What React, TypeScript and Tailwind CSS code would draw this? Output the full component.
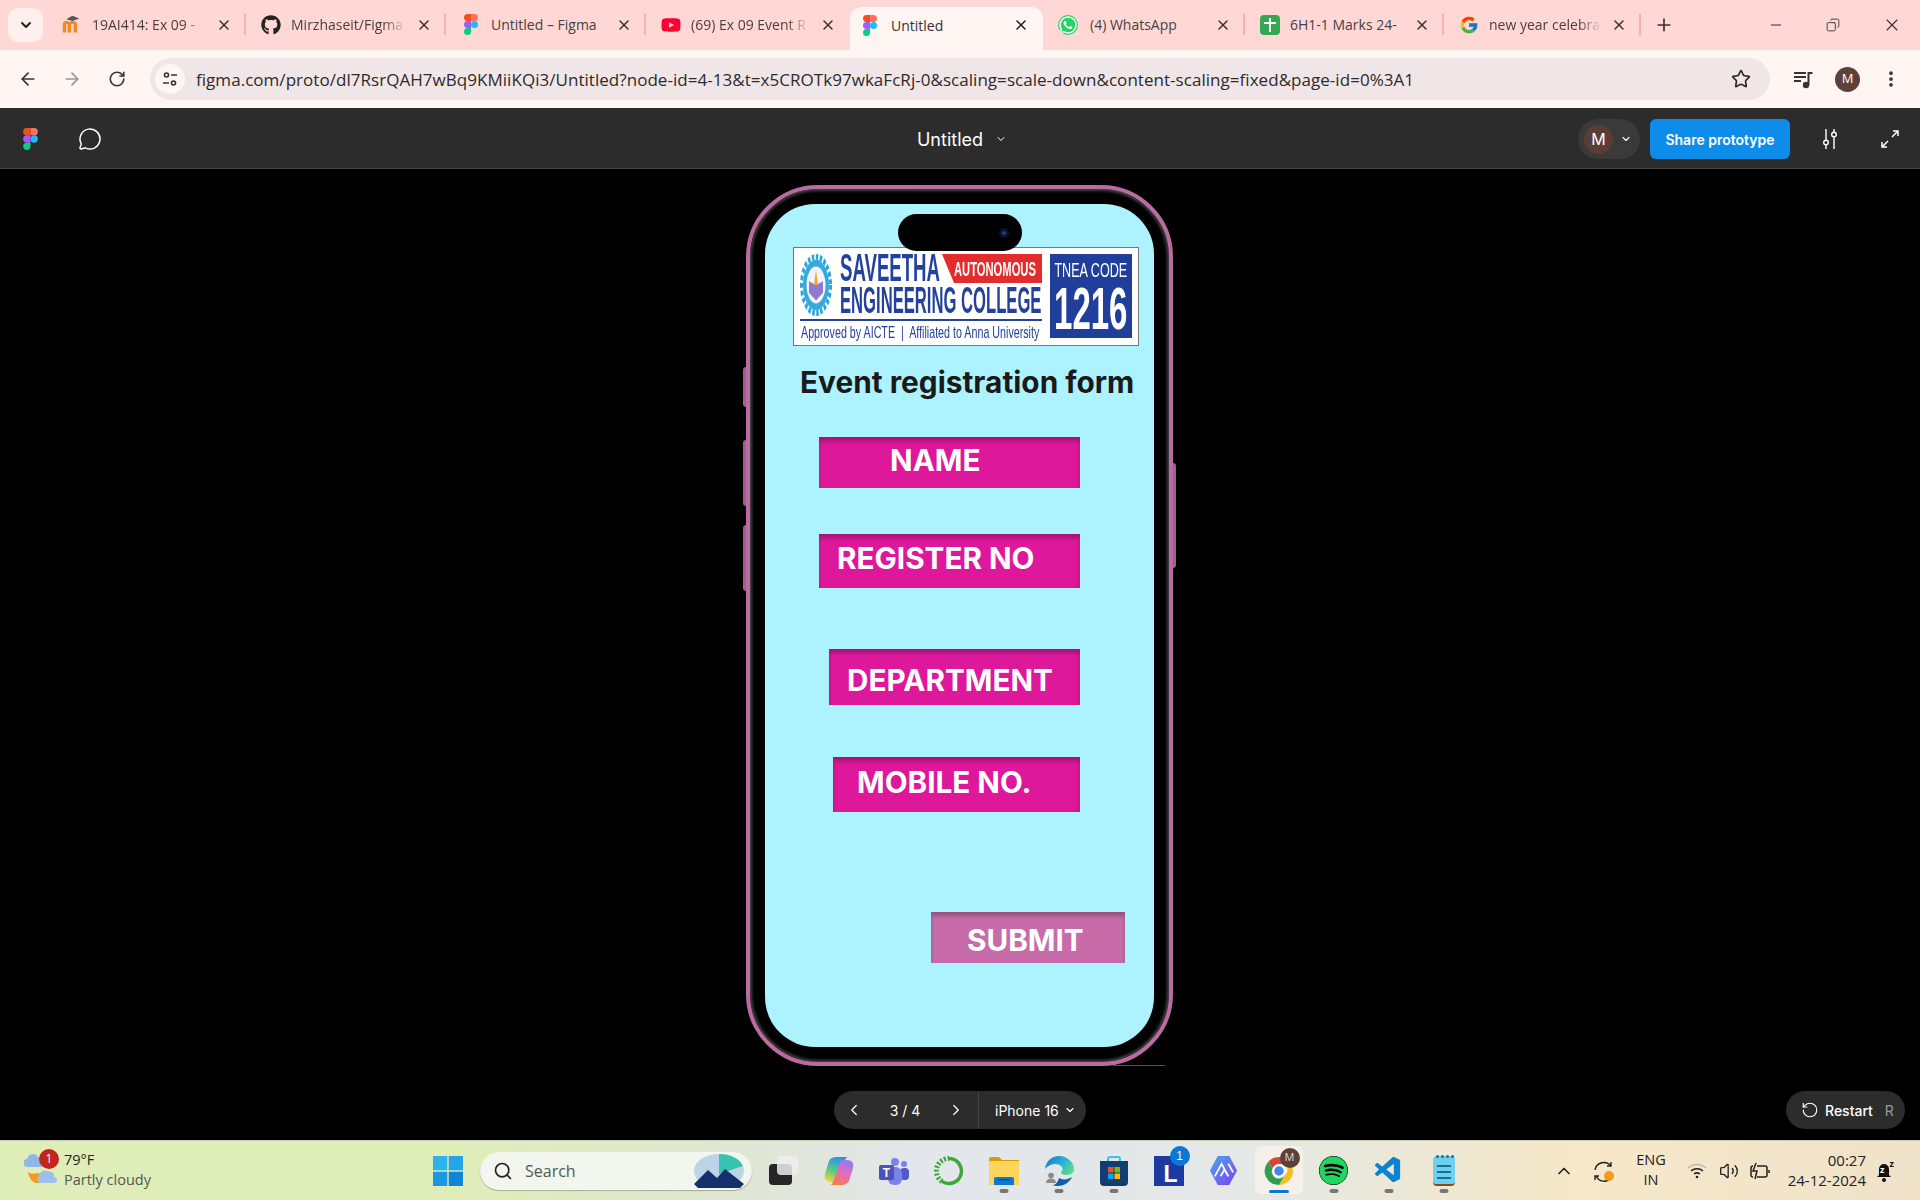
import type { ReactNode } from "react";
import {
  ArrowLeft,
  ArrowRight,
  ChevronDown,
  ChevronLeft,
  ChevronRight,
  ChevronUp,
  Copy,
  MessageCircle,
  Minus,
  MoreVertical,
  Plus,
  RotateCcw,
  RotateCw,
  Search,
  Star,
  Volume2,
  X,
} from "lucide-react";
import { FaGithub, FaSpotify, FaWhatsapp, FaYoutube } from "react-icons/fa";
import { FcGoogle } from "react-icons/fc";
import { VscVscode } from "react-icons/vsc";

const ui = "font-['Open_Sans','Noto_Sans',sans-serif]";
const inter = "font-['Inter',sans-serif]";

function FigmaLogo({ className }: { className: string }) {
  return (
    <svg viewBox="0 0 38 57" className={className}>
      <path d="M19 28.5a9.5 9.5 0 1 1 19 0 9.5 9.5 0 0 1-19 0z" fill="#1ABCFE" />
      <path d="M0 47.5A9.5 9.5 0 0 1 9.5 38H19v9.5a9.5 9.5 0 1 1-19 0z" fill="#0ACF83" />
      <path d="M19 0v19h9.5a9.5 9.5 0 1 0 0-19H19z" fill="#FF7262" />
      <path d="M0 9.5A9.5 9.5 0 0 0 9.5 19H19V0H9.5A9.5 9.5 0 0 0 0 9.5z" fill="#F24E1E" />
      <path d="M0 28.5A9.5 9.5 0 0 0 9.5 38H19V19H9.5A9.5 9.5 0 0 0 0 28.5z" fill="#A259FF" />
    </svg>
  );
}

function MoodleIcon() {
  return (
    <svg viewBox="0 0 24 24" className="size-[21px] shrink-0">
      <path d="M2 21v-9c0-3 2-4 4-4 1.500 0 2.500.5 3.500 1.500C10.500 8.500 12 8 13.500 8c3 0 5 1.500 5 4.500V21h-4v-8c0-1-.5-1.500-1.500-1.500s-1.500.5-1.500 1.500v8h-4v-8c0-1-.5-1.500-1.500-1.500S6 12 6 13v8z" fill="#f08a24" />
      <path d="M6 6l7-4 8 3-8 3z" fill="#555" />
    </svg>
  );
}

function SheetsIcon() {
  return (
    <div className="relative flex size-5 shrink-0 items-center justify-center rounded-sm bg-[#34a853]">
      <div className="h-3.5 w-0.5 bg-white" />
      <div className="absolute top-[7px] h-0.5 w-3 bg-white" />
    </div>
  );
}

type TabProps = { icon: ReactNode; title: string; sep?: boolean; fade?: boolean; width: string };

function Tab({ icon, title, sep = true, fade = false, width }: TabProps) {
  return (
    <div className={`relative flex h-[33px] shrink-0 items-center pl-[15px] pr-[14px] ${width}`}>
      {icon}
      <span className={`ml-[10px] flex-1 overflow-hidden whitespace-nowrap text-[14px] text-[#4a4040] ${fade ? "[mask-image:linear-gradient(90deg,#000_74%,transparent_92%)]" : ""}`}>
        {title}
      </span>
      <X className="size-4 shrink-0 text-[#3a3030]" strokeWidth={2.2} />
      {sep && <div className="absolute right-0 top-[6px] h-[21px] w-0.5 bg-[#f5b0aa]" />}
    </div>
  );
}

function TabStrip() {
  return (
    <div className="flex h-[50px] items-end bg-[#ffd8d5] pb-[9px]">
      <div className="mb-[-1px] ml-[8px] mr-[3px] flex h-[34px] w-[35px] items-center justify-center rounded-[10px] bg-[#fff0ee]">
        <ChevronDown className="size-4 text-[#222]" strokeWidth={3} />
      </div>
      <Tab width="w-[200px]" fade icon={<MoodleIcon />} title="19AI414: Ex 09 - " />
      <Tab width="w-[200px]" fade icon={<FaGithub className="size-5 shrink-0 text-[#222]" />} title="Mirzhaseit/Figma" />
      <Tab width="w-[200px]" icon={<FigmaLogo className="h-[21px] w-5 shrink-0" />} title="Untitled – Figma" />
      <Tab width="w-[204px]" fade sep={false} icon={<FaYoutube className="size-5 shrink-0 text-[#ff0033]" />} title="(69) Ex 09 Event R" />
      <div className="relative mb-[-9px] flex h-[43px] w-[193px] shrink-0 items-center rounded-t-[12px] bg-[#fff6f4] pb-[7px] pl-[10px] pr-[14px]">
        <FigmaLogo className="h-[21px] w-5 shrink-0" />
        <span className="ml-[11px] flex-1 text-[14px] text-[#3a3030]">Untitled</span>
        <X className="size-4 shrink-0 text-[#222]" strokeWidth={2.4} />
      </div>
      <Tab width="w-[202px]" icon={<FaWhatsapp className="mr-[2px] size-5 shrink-0 rounded-full bg-[#25d366] text-white" />} title="(4) WhatsApp" />
      <Tab width="w-[199px]" icon={<SheetsIcon />} title="6H1-1 Marks 24-" />
      <Tab width="w-[197px]" fade icon={<FcGoogle className="size-5 shrink-0" />} title="new year celebrations" />
      <Plus className="mb-[6px] ml-[13px] size-5 shrink-0 text-[#3a3030]" strokeWidth={2} />
      <div className="ml-auto flex h-[33px] items-center gap-[42px] pr-[18px] text-[#333]">
        <Minus className="size-4" strokeWidth={1.5} />
        <Copy className="size-[14px] -scale-x-100" strokeWidth={1.5} />
        <X className="size-5" strokeWidth={1.3} />
      </div>
    </div>
  );
}

function AddressBar() {
  return (
    <div className="flex h-[58px] items-center bg-[#fff6f4] pl-[18px] pr-[18px]">
      <ArrowLeft className="size-[20px] text-[#3a3535]" strokeWidth={2} />
      <ArrowRight className="ml-[24px] size-[20px] text-[#9a9494]" strokeWidth={2} />
      <RotateCw className="ml-[26px] size-[18px] text-[#3a3535]" strokeWidth={2.2} />
      <div className="ml-[24px] flex h-[42px] w-[1620px] items-center rounded-full bg-[#f1e6e7] pl-[5px] pr-[19px]">
        <div className="flex size-[30px] items-center justify-center rounded-full bg-[#fff6f4]">
          <svg viewBox="0 0 16 16" className="size-4 text-[#333]" fill="none" stroke="currentColor" strokeWidth="1.6">
            <circle cx="4.500" cy="4" r="2" />
            <path d="M9 4h6M1 12h6" />
            <circle cx="11.500" cy="12" r="2" />
          </svg>
        </div>
        <span className="ml-[11px] flex-1 whitespace-nowrap pt-[1px] text-[17px] tracking-[0.04px] text-[#2e2a2a]">
          figma.com/proto/dl7RsrQAH7wBq9KMiiKQi3/Untitled?node-id=4-13&t=x5CROTk97wkaFcRj-0&scaling=scale-down&content-scaling=fixed&page-id=0%3A1
        </span>
        <Star className="size-[20px] text-[#2e2a2a]" strokeWidth={2} />
      </div>
      <svg viewBox="0 0 20 20" className="ml-[23px] size-[20px] text-[#333]" fill="none" stroke="currentColor" strokeWidth="2">
        <path d="M1 4h12M1 8h12M1 12h7M15.500 16V4h4" />
        <circle cx="13" cy="16" r="2.200" fill="currentColor" />
      </svg>
      <div className="ml-[22px] flex size-[25px] items-center justify-center rounded-full bg-[#5d4037] text-[13px] text-white">M</div>
      <MoreVertical className="ml-[21px] size-[20px] text-[#333]" strokeWidth={2.5} />
    </div>
  );
}

function FigmaBar() {
  return (
    <div className={`grid h-[61px] grid-cols-[1fr_auto_1fr] items-center border-b border-[#444] bg-[#2c2c2c] pt-[2px] text-white ${inter}`}>
      <div className="flex items-center pl-[23px]">
        <FigmaLogo className="h-[22px] w-[15px]" />
        <MessageCircle className="ml-[40px] size-[24px]" strokeWidth={1.5} />
      </div>
      <div className="flex items-center pl-[4px]">
        <span className="text-[18px] font-normal">Untitled</span>
        <ChevronDown className="ml-[12px] size-3" strokeWidth={2} />
      </div>
      <div className="flex items-center justify-end pr-[20px]">
        <div className="flex h-[40px] w-[62px] items-center rounded-full bg-[#3a3a3a] pl-[6px]">
          <div className="flex size-[29px] items-center justify-center rounded-full bg-[#5a3d34] text-[16px]">M</div>
          <ChevronDown className="ml-[7px] size-3" strokeWidth={2.2} />
        </div>
        <div className="ml-[10px] flex h-[40px] w-[140px] items-center justify-center rounded-md bg-[#0d8ce9] text-[14px] font-semibold">
          Share prototype
        </div>
        <svg viewBox="0 0 20 24" className="ml-[30px] h-[24px] w-[20px]" fill="none" stroke="currentColor" strokeWidth="1.400">
          <path d="M6 2v11M6 18v4M14 2v3M14 10v12" />
          <circle cx="6" cy="15.500" r="2.300" />
          <circle cx="14" cy="7.500" r="2.300" />
        </svg>
        <svg viewBox="0 0 20 20" className="ml-[40px] size-[20px]" fill="none" stroke="currentColor" strokeWidth="1.500">
          <path d="M12 8l6-6M13 2h5v5M8 12l-6 6M2 13v5h5" />
        </svg>
      </div>
    </div>
  );
}

function CollegeBanner() {
  return (
    <div className="ml-[28px] flex h-[99px] w-[346px] border border-[#777] bg-white pl-[6px] pt-[6px] font-['Liberation_Sans',sans-serif]">
      <svg viewBox="0 0 32 32" preserveAspectRatio="none" className="h-[62px] w-[32px] shrink-0">
        <circle cx="16" cy="16" r="14.500" fill="none" stroke="#2ba6d8" strokeWidth="3" strokeDasharray="2.500 1.500" />
        <circle cx="16" cy="16" r="13" fill="#35a8dc" />
        <circle cx="16" cy="16" r="9.500" fill="#f4f4ff" />
        <path d="M9 14l7 2 7-2v6l-7 4-7-4z" fill="#8f7bd0" />
        <path d="M16 8l2 8h-4z" fill="#f2a72e" />
      </svg>
      <div className="ml-[8px] w-[202px] text-[#24429c]">
        <div className="flex h-[29px]">
          <div className="w-[102px]">
            <div className="w-max origin-left scale-x-[0.49] whitespace-nowrap text-[38px] font-bold leading-[29px]">SAVEETHA</div>
          </div>
          <div className="flex h-[29px] w-[100px] items-center bg-[#e32c2c] pl-[12px] [clip-path:polygon(0_0,100%_0,100%_100%,12%_100%)]">
            <div className="w-max origin-left scale-x-[0.56] whitespace-nowrap text-[20px] font-bold leading-none text-white">AUTONOMOUS</div>
          </div>
        </div>
        <div className="mt-[5px] w-max origin-left scale-x-[0.462] whitespace-nowrap text-[36px] font-bold leading-[26px]">ENGINEERING COLLEGE</div>
        <div className="ml-[-40px] mt-[5px] h-0.5 w-[242px] bg-[#24429c]" />
        <div className="ml-[-39px] mt-[3px] w-max origin-left scale-x-[0.63] whitespace-pre text-[17px] leading-[18px]">Approved by AICTE  |  Affiliated to Anna University</div>
      </div>
      <div className="ml-[8px] flex h-[84px] w-[82px] flex-col items-center bg-[#1f3f9b] text-white">
        <div className="mt-[4px] w-max scale-x-[0.63] whitespace-nowrap text-[20px] leading-[24px]">TNEA CODE</div>
        <div className="mt-[2px] w-max scale-x-[0.55] whitespace-nowrap text-[60px] font-bold leading-[50px]">1216</div>
      </div>
    </div>
  );
}

function Phone() {
  return (
    <div className="relative h-[881px] w-[427px] shrink-0 rounded-[72px] border-[4px] border-[#ba6ca0] bg-black p-[15px] shadow-[inset_0_0_3px_2px_#444]">
      {/* side buttons */}
      <div className="absolute left-[-7px] top-[178px] h-[40px] w-[3px] rounded-l bg-[#a55d90]" />
      <div className="absolute left-[-7px] top-[251px] h-[66px] w-[3px] rounded-l bg-[#a55d90]" />
      <div className="absolute left-[-7px] top-[336px] h-[66px] w-[3px] rounded-l bg-[#a55d90]" />
      <div className="absolute right-[-7px] top-[274px] h-[105px] w-[3px] rounded-r bg-[#a55d90]" />
      <div className="absolute left-[167px] top-0 h-[2px] w-[85px] rounded-b bg-[#333]" />
      <div className="absolute bottom-[-4px] left-[363px] h-px w-[52px] bg-[#555]" />
      {/* island */}
      <div className="absolute left-[148px] top-[25px] z-10 flex h-[37px] w-[124px] items-center justify-end rounded-full bg-black pr-[13px]">
        <div className="flex size-[10px] items-center justify-center rounded-full bg-[#0b1230]">
          <div className="size-1 rounded-full bg-[#24408c]" />
        </div>
      </div>

      <div className={`flex h-[843px] w-[389px] flex-col rounded-[50px] bg-[#adf3ff] pt-[43px] ${inter}`}>
        <CollegeBanner />
        <div className="ml-[35px] mt-[16px] h-[40px] whitespace-nowrap text-[29.800px] font-bold leading-[40px] text-[#1a1a1a]">
          Event registration form
        </div>
        <div className="ml-[54px] mt-[35px] h-[51px] w-[261px] bg-[#dd189b] pl-[71px] pt-[6px] text-[29.700px] font-bold leading-[35px] text-white shadow-[inset_0_4px_4px_rgba(0,0,0,0.25)]">
          NAME
        </div>
        <div className="ml-[54px] mt-[46px] h-[54px] w-[261px] bg-[#dd189b] pl-[18px] pt-[7px] text-[29.700px] font-bold leading-[35px] text-white shadow-[inset_0_4px_4px_rgba(0,0,0,0.25)]">
          REGISTER NO
        </div>
        <div className="ml-[64px] mt-[61px] h-[56px] w-[251px] bg-[#dd189b] pl-[18px] pt-[14px] text-[29.700px] font-bold leading-[35px] text-white shadow-[inset_0_4px_4px_rgba(0,0,0,0.25)]">
          DEPARTMENT
        </div>
        <div className="ml-[68px] mt-[52px] h-[55px] w-[247px] bg-[#dd189b] pl-[24px] pt-[8px] text-[29.700px] font-bold leading-[35px] text-white shadow-[inset_0_4px_4px_rgba(0,0,0,0.25)]">
          MOBILE NO.
        </div>
        <div className="ml-[166px] mt-[100px] h-[51px] w-[194px] bg-[#c76ca8] pl-[36px] pt-[11px] text-[29.700px] font-bold leading-[35px] text-white shadow-[inset_0_4px_4px_rgba(0,0,0,0.25)]">
          SUBMIT
        </div>
      </div>
    </div>
  );
}

function PrototypeNav() {
  return (
    <div className={`grid grid-cols-[1fr_auto_1fr] items-center text-white ${inter}`}>
      <div />
      <div className="flex h-[38px] w-[252px] items-center rounded-full bg-[#2c2c2c] text-[14px]">
        <div className="flex h-full w-[145px] items-center justify-between border-r border-[#444] pl-[11px] pr-[13px]">
          <ChevronLeft className="size-[18px]" strokeWidth={1.6} />
          <span>3 / 4</span>
          <ChevronRight className="size-[18px]" strokeWidth={1.6} />
        </div>
        <span className="ml-[16px]">iPhone 16</span>
        <ChevronDown className="ml-[5px] size-3" strokeWidth={2.2} />
      </div>
      <div className="flex justify-end pr-[15px]">
        <div className="flex h-[38px] w-[119px] items-center rounded-full bg-[#2c2c2c] pl-[15px] text-[14px] font-medium">
          <RotateCcw className="size-[18px]" strokeWidth={1.5} />
          <span className="ml-[6px]">Restart</span>
          <span className="ml-[12px] font-normal text-[#999]">R</span>
        </div>
      </div>
    </div>
  );
}

function WeatherIcon() {
  return (
    <div className="relative h-[38px] w-[36px]">
      <svg viewBox="0 0 36 38" className="size-full">
        <path d="M4 15a4 4 0 0 1-1-8 6 6 0 0 1 11-2 5 5 0 0 1 5 5 3 3 0 0 1-1 5z" fill="#8eb6e8" />
        <path d="M4 20c3 2 6 2 9 1 3 1 8 0 12-2-1 7-6 12-12 12-5 0-8-5-9-11z" fill="#f39a1f" />
        <path d="M16 31a4 4 0 0 1-1-7 6 6 0 0 1 10-4 4 4 0 0 1 5 5 3 3 0 0 1 0 6z" fill="#9bc0ee" />
      </svg>
      <div className="absolute left-[15px] top-[-3px] flex size-[20px] items-center justify-center rounded-full bg-[#c4261d] text-[12px] text-white">1</div>
    </div>
  );
}

function AppSlot({ children, dot, active }: { children: ReactNode; dot?: boolean; active?: boolean }) {
  return (
    <div className="relative flex h-[55px] w-[55px] items-center justify-center">
      {active && <div className="absolute left-[4px] top-[3px] size-[48px] rounded-md bg-[#f5f1ea]" />}
      <div className="relative">{children}</div>
      {dot && <div className="absolute bottom-[5px] left-1/2 h-[4px] w-[9px] -translate-x-1/2 rounded-full bg-[#777]" />}
      {active && <div className="absolute bottom-[5px] left-1/2 h-[3px] w-[20px] -translate-x-1/2 rounded-full bg-[#0a78d4]" />}
    </div>
  );
}

function TaskIcons() {
  return (
    <div className="ml-[4px] flex items-center">
      <AppSlot>
        <div className="relative h-[29px] w-[29px]">
          <div className="absolute bottom-0 left-0 h-[21px] w-[23px] rounded-sm bg-[#262626]" />
          <div className="absolute right-0 top-0 h-[19px] w-[21px] rounded-sm bg-[#eeeeee] opacity-85" />
        </div>
      </AppSlot>
      <AppSlot>
        <svg viewBox="0 0 30 30" className="size-[30px]">
          <defs>
            <linearGradient id="copA" x1="0.6" y1="0" x2="0.3" y2="1">
              <stop offset="0" stopColor="#2f8cf0" />
              <stop offset="0.6" stopColor="#5ccf7e" />
              <stop offset="1" stopColor="#f4d23c" />
            </linearGradient>
            <linearGradient id="copB" x1="0.7" y1="0" x2="0.3" y2="1">
              <stop offset="0" stopColor="#9a78f0" />
              <stop offset="0.6" stopColor="#ee6cb0" />
              <stop offset="1" stopColor="#f4803c" />
            </linearGradient>
          </defs>
          <path d="M12 1C7 1 5 4 4 8L1 18c-1 5 1 8 6 8h3c3 0 4-2 5-5l5-14c1-3 2-6 4-6z" fill="url(#copA)" />
          <path d="M18 29c5 0 7-3 8-7l3-10c1-5-1-8-6-8h-3c-3 0-4 2-5 5l-5 14c-1 3-2 6-4 6z" fill="url(#copB)" />
        </svg>
      </AppSlot>
      <AppSlot>
        <svg viewBox="0 0 30 30" className="size-[30px]">
          <circle cx="25" cy="8" r="3" fill="#7b83eb" />
          <rect x="21" y="12" width="9" height="12" rx="4" fill="#5059c9" />
          <circle cx="16" cy="6" r="4" fill="#7b83eb" />
          <rect x="9" y="11" width="14" height="18" rx="6" fill="#7b83eb" />
          <rect x="0" y="9" width="15" height="15" rx="2" fill="#4b53bc" />
          <text x="7.500" y="21" textAnchor="middle" fontSize="12" fontWeight="700" fill="#fff" fontFamily="Liberation Sans">T</text>
        </svg>
      </AppSlot>
      <AppSlot>
        <svg viewBox="0 0 30 30" className="size-[30px]" fill="none" stroke="#3aa935">
          <path d="M15 2.500a12.500 12.500 0 1 1-7 22.900" strokeWidth="3.500" />
          <path d="M8 25.400A12.500 12.500 0 0 1 15 2.500" strokeWidth="5" strokeDasharray="2 1.800" />
        </svg>
      </AppSlot>
      <AppSlot dot>
        <svg viewBox="0 0 30 28" className="h-[28px] w-[30px]">
          <path d="M0 2a2 2 0 0 1 2-2h8l3 3h17v5H0z" fill="#d69c00" />
          <rect x="0" y="4" width="30" height="24" rx="1" fill="#ffd45a" />
          <path d="M5 28v-6a2 2 0 0 1 2-2h16a2 2 0 0 1 2 2v6z" fill="#0a78d4" />
          <rect x="9" y="22" width="12" height="1.500" fill="#0b4f8f" />
        </svg>
      </AppSlot>
      <AppSlot dot>
        <svg viewBox="0 0 30 30" className="size-[30px]">
          <defs>
            <linearGradient id="edge" x1="0" y1="0" x2="1" y2="0.6">
              <stop offset="0" stopColor="#0f74c4" />
              <stop offset="0.6" stopColor="#25b4d8" />
              <stop offset="1" stopColor="#5ad88a" />
            </linearGradient>
          </defs>
          <path d="M1 13C2 5 8 0 15 0c8 0 15 6 15 13 0 4-3 6-8 6-3 0-5-1-5-3 2-1 2-4 0-6-3-3-11-3-16 3z" fill="url(#edge)" />
          <path d="M8 29c8 3 17-1 20-8-4 3-10 3-13 1-1 3-3 6-7 7z" fill="#0f60a8" />
          <circle cx="7" cy="22" r="7.500" fill="#e4e4e2" />
          <circle cx="7" cy="19.500" r="2.800" fill="#8b8b8b" />
          <path d="M2 27c0-3 2-4.500 5-4.500s5 1.500 5 4.500z" fill="#8b8b8b" />
        </svg>
      </AppSlot>
      <AppSlot dot>
        <svg viewBox="0 0 30 30" className="size-[30px]">
          <path d="M9 7V3a2 2 0 0 1 2-2h8a2 2 0 0 1 2 2v4" fill="none" stroke="#33c4ee" strokeWidth="2" />
          <path d="M1 5h28v21a4 4 0 0 1-4 4H5a4 4 0 0 1-4-4z" fill="#123d72" />
          <rect x="9" y="11" width="5.500" height="5.500" fill="#f25022" />
          <rect x="15.500" y="11" width="5.500" height="5.500" fill="#7fba00" />
          <rect x="9" y="17.500" width="5.500" height="5.500" fill="#00a4ef" />
          <rect x="15.500" y="17.500" width="5.500" height="5.500" fill="#ffb900" />
        </svg>
      </AppSlot>
      <AppSlot>
        <div className="relative size-[30px] bg-[#1c3aa0] pl-[10px] pt-[7px] font-['Liberation_Sans',sans-serif] text-[23px] font-bold leading-[22px] text-white">
          L
          <div className="absolute left-[16px] top-[-10px] flex size-[20px] items-center justify-center rounded-full bg-[#0a78d4] text-[12px] font-normal text-white">1</div>
        </div>
      </AppSlot>
      <AppSlot>
        <svg viewBox="0 0 30 32" className="h-[31px] w-[29px]">
          <defs>
            <linearGradient id="arc" x1="0" y1="0" x2="0.8" y2="1">
              <stop offset="0" stopColor="#4aa8ee" />
              <stop offset="1" stopColor="#7a4af0" />
            </linearGradient>
          </defs>
          <path d="M9 1h12l8 15-8 15H9L1 16z" fill="url(#arc)" />
          <path d="M6 22l7-13 7 13M12 22l4-7 4 7M20 9l5 9" fill="none" stroke="#fff" strokeWidth="1.800" />
        </svg>
      </AppSlot>
      <AppSlot active>
        <svg viewBox="0 0 30 30" className="size-[30px]">
          <path d="M15 1a14 14 0 0 1 12.100 7H15a7 7 0 0 0-6.300 4L4 6a14 14 0 0 1 11-5z" fill="#d8453a" />
          <path d="M27.100 8A14 14 0 0 1 15 29l6-10a7 7 0 0 0 0-11z" fill="#f4c01e" />
          <path d="M4 6a14 14 0 0 0 11 23l6-10a7 7 0 0 1-12.300-7z" fill="#2f9e4f" />
          <circle cx="15" cy="15" r="5.500" fill="#4285f4" stroke="#fff" strokeWidth="1.500" />
        </svg>
        <div className="absolute right-[-6px] top-[-8px] flex size-[20px] items-center justify-center rounded-full bg-[#5d4037] text-[11px] text-[#ddd]">M</div>
      </AppSlot>
      <AppSlot dot>
        <FaSpotify className="size-[29px] rounded-full bg-black text-[#1ed760]" />
      </AppSlot>
      <AppSlot dot>
        <VscVscode className="size-[31px] text-[#0a84d0]" />
      </AppSlot>
      <AppSlot dot>
        <div className="relative flex h-[30px] w-[22px] flex-col gap-[4px] rounded-sm border-b-2 border-[#8a4a1e] bg-[#6fd0ee] px-[4px] pt-[9px]">
          <div className="absolute left-[3px] top-[-1px] flex gap-[2px]">
            <div className="size-[3px] rounded-full bg-[#1b6f96]" />
            <div className="size-[3px] rounded-full bg-[#1b6f96]" />
            <div className="size-[3px] rounded-full bg-[#1b6f96]" />
            <div className="size-[3px] rounded-full bg-[#1b6f96]" />
          </div>
          <div className="h-[2px] bg-[#1b6f96]" />
          <div className="h-[2px] bg-[#1b6f96]" />
          <div className="h-[2px] bg-[#1b6f96]" />
        </div>
      </AppSlot>
    </div>
  );
}

function Tray() {
  return (
    <div className="ml-[83px] flex items-center text-[#222]">
      <ChevronUp className="size-[20px]" strokeWidth={2} />
      <svg viewBox="0 0 22 22" className="ml-[19px] size-[22px]" fill="none" stroke="currentColor" strokeWidth="1.400">
        <path d="M2 10a9 9 0 0 1 16-4M18 2v4h-4M18 18a9 9 0 0 1-15-2M2 20v-4h4" />
        <circle cx="16" cy="16" r="5" fill="#f59a1b" stroke="none" />
      </svg>
      <div className="-mt-[2px] ml-[18px] w-[36px] text-center text-[14.500px] leading-[20px]">
        <div>ENG</div>
        <div>IN</div>
      </div>
      <svg viewBox="0 0 20 16" className="ml-[18px] h-[16px] w-[20px]" fill="none" strokeWidth="1.500">
        <path d="M1 5a13 13 0 0 1 18 0" stroke="#bbb" />
        <path d="M4 8a9 9 0 0 1 12 0M7 11a5 5 0 0 1 6 0" stroke="#222" />
        <circle cx="10" cy="14" r="1.300" fill="#222" />
      </svg>
      <Volume2 className="ml-[12px] size-[20px]" strokeWidth={1.6} />
      <svg viewBox="0 0 22 18" className="ml-[10px] h-[18px] w-[22px]" fill="none" stroke="currentColor" strokeWidth="1.500">
        <path d="M8 4h8a2 2 0 0 1 2 2v7a2 2 0 0 1-2 2H8M4 15a2 2 0 0 1-2-2V6a2 2 0 0 1 2-2" />
        <path d="M20 8v3M7 1L4 9h4l-2 8" />
      </svg>
      <div className="-mt-[2px] ml-[11px] w-[84px] whitespace-nowrap text-right text-[15px] leading-[20px]">
        <div>00:27</div>
        <div>24-12-2024</div>
      </div>
      <div className="relative ml-[9px] h-[24px] w-[18px]">
        <svg viewBox="0 0 18 24" className="h-[24px] w-[18px]" fill="#111">
          <path d="M9 5a5 5 0 0 1 5 5v6l2 2H2l2-2v-6a5 5 0 0 1 5-5z" />
          <circle cx="9" cy="21" r="2" />
        </svg>
        <span className="absolute left-[5px] top-[6px] text-[9px] font-bold leading-none text-white">z</span>
        <span className="absolute right-[-1px] top-0 text-[9px] font-bold leading-none text-[#111]">z</span>
      </div>
    </div>
  );
}

function Taskbar() {
  return (
    <div className={`flex h-[60px] items-center border-t border-[#c8cdb8] bg-[linear-gradient(90deg,#dfeeb8_0%,#dfedb9_24%,#dfe6d2_38%,#e3e6ec_48%,#e4e8e6_65%,#f6e8c8_82%,#f0e2c8_100%)] ${ui}`}>
      <div className="flex w-[433px] items-center pl-[24px]">
        <WeatherIcon />
        <div className="-mt-[2px] ml-[4px] text-[14.500px] leading-[20px] text-[#222]">
          <div>79°F</div>
          <div className="text-[#555]">Partly cloudy</div>
        </div>
      </div>
      <svg viewBox="0 0 30 30" className="size-[30px]">
        <rect x="0" y="0" width="14.300" height="14.300" fill="#2bb3ee" />
        <rect x="15.700" y="0" width="14.300" height="14.300" fill="#26a4e8" />
        <rect x="0" y="15.700" width="14.300" height="14.300" fill="#1a97e0" />
        <rect x="15.700" y="15.700" width="14.300" height="14.300" fill="#0f85d6" />
      </svg>
      <div className="ml-[17px] flex h-[38px] w-[272px] items-center rounded-full bg-[#f3f6ee] pl-[13px] shadow-[0_1px_1px_rgba(0,0,0,0.25)]">
        <Search className="size-[20px] text-[#222]" strokeWidth={2} />
        <span className="ml-[12px] flex-1 text-[16px] text-[#555]">Search</span>
        <svg viewBox="0 0 54 34" className="mr-[6px] h-[34px] w-[54px]">
          <ellipse cx="27" cy="17" rx="25" ry="17" fill="#bcd5e6" />
          <path d="M27 0a25 17 0 0 1 24 12L27 20z" fill="#35c4b0" />
          <path d="M2 30l14-14 9 8 8-9 19 15-4 4H6z" fill="#16306e" />
        </svg>
      </div>
      <TaskIcons />
      <Tray />
    </div>
  );
}

export default function App() {
  return (
    <div className={`flex h-[1200px] w-[1920px] flex-col overflow-hidden bg-black ${ui}`}>
      <TabStrip />
      <AddressBar />
      <FigmaBar />
      <div className="flex flex-1 flex-col">
        <div className="flex justify-center pr-[1px] pt-[16px]">
          <Phone />
        </div>
        <div className="mt-[25px]">
          <PrototypeNav />
        </div>
      </div>
      <Taskbar />
    </div>
  );
}
